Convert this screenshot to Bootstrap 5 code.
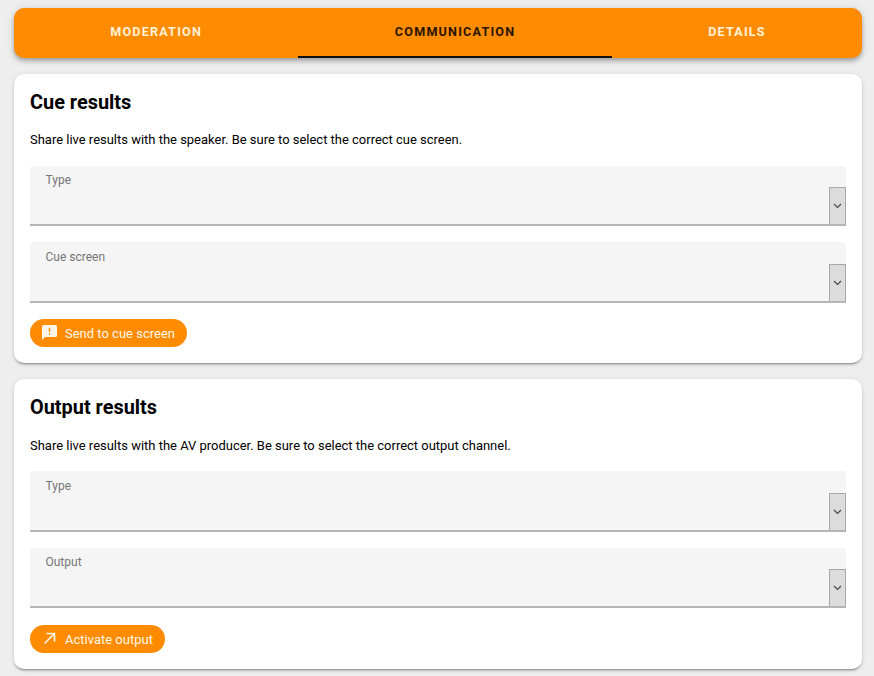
<!DOCTYPE html>
<html lang="en">
<head>
<meta charset="utf-8">
<title>Communication</title>
<link href="https://cdn.jsdelivr.net/npm/bootstrap@5.3.0/dist/css/bootstrap.min.css" rel="stylesheet">
<style>
html, body { height: 100%; }
body { background: #eeeeee; font-family: Roboto, sans-serif; color: #000; overflow: hidden; }
.page-wrap { padding: 8px 12px 0 14px; }
.tabbar { background: #ff8c00; border-radius: 10px; height: 50px; box-shadow: 0 2px 4px -1px rgba(0,0,0,.2), 0 4px 5px 0 rgba(0,0,0,.14), 0 1px 10px 0 rgba(0,0,0,.12); margin-bottom: 15.8px; overflow: hidden; }
.tabbar .tab-link { flex: 1 1 auto; text-align: center; color: #fff0d8; font-size: 12.6px; font-weight: 700; letter-spacing: 1.2px; line-height: 48px; height: 50px; border-bottom: 2px solid transparent; text-decoration: none; }
.tabbar .tab-link.is-on { color: #2a1500; border-bottom-color: #14100c; padding: 0 .5px; }
.panel { background: #fff; border: 0; border-radius: 10px; box-shadow: 0 3px 1px -2px rgba(0,0,0,.2), 0 2px 2px 0 rgba(0,0,0,.14), 0 1px 5px 0 rgba(0,0,0,.12); padding: 16px 16px 16.2px; margin-bottom: 16px; }
.panel h2 { font-size: 19.9px; font-weight: 700; line-height: 24px; padding-top: 1px; margin: 0 0 15.5px; }
.panel p { font-size: 12.98px; line-height: 20px; margin: 0 0 15.500px; }
.select-box { position: relative; background: #f5f5f5; height: 60.4px; border-radius: 4px 4px 0 0; border-bottom: 2px solid #b5b5b5; margin-bottom: 16px; padding: 6.5px 16px 6px 15.5px; font-size: 12px; line-height: 16px; color: #757575; }
.select-box.before-pill { margin-bottom: 16.6px; }
.select-arrow { position: absolute; right: 0; bottom: 0; width: 17px; height: 37px; background: #dcdcdc; border: 1px solid #a8a8a8; border-bottom: 0; display: flex; align-items: center; justify-content: center; }
.pill { display: flex; align-items: center; background: #ff8c00; color: #fff6ea; border: 0; border-radius: 14px; height: 28px; padding: 1px 12.5px 0 12px; font-size: 13px; line-height: 27px; }
.pill:hover, .pill:active { background: #ff8c00; color: #fff6ea; }
.pill svg { margin-right: 8px; margin-top: -2px; flex: none; }
</style>
</head>
<body>
<div class="page-wrap">
  <nav class="tabbar d-flex">
    <a class="tab-link" href="#">MODERATION</a>
    <a class="tab-link is-on" href="#">COMMUNICATION</a>
    <a class="tab-link" href="#">DETAILS</a>
  </nav>

  <section class="panel card">
    <h2>Cue results</h2>
    <p>Share live results with the speaker. Be sure to select the correct cue screen.</p>
    <div class="select-box">Type
      <span class="select-arrow"><svg width="9" height="6" viewBox="0 0 9 6"><path d="M1 1l3.500 3.500L8 1" fill="none" stroke="#444" stroke-width="1.100"/></svg></span>
    </div>
    <div class="select-box before-pill">Cue screen
      <span class="select-arrow"><svg width="9" height="6" viewBox="0 0 9 6"><path d="M1 1l3.500 3.500L8 1" fill="none" stroke="#444" stroke-width="1.100"/></svg></span>
    </div>
    <div class="d-flex">
      <button class="pill" type="button">
        <svg width="15" height="15" viewBox="0 0 15 15"><path fill-rule="evenodd" fill="#fff6ea" d="M1.500 0h12A1.500 1.500 0 0 1 15 1.500v9a1.500 1.500 0 0 1-1.500 1.500H3L0 15V1.500A1.500 1.500 0 0 1 1.500 0zM6.800 2.800v4.200h1.400V2.800zM6.800 8.300v1.400h1.400V8.300z"/></svg>
        Send to cue screen
      </button>
    </div>
  </section>

  <section class="panel card">
    <h2>Output results</h2>
    <p>Share live results with the AV producer. Be sure to select the correct output channel.</p>
    <div class="select-box">Type
      <span class="select-arrow"><svg width="9" height="6" viewBox="0 0 9 6"><path d="M1 1l3.500 3.500L8 1" fill="none" stroke="#444" stroke-width="1.100"/></svg></span>
    </div>
    <div class="select-box before-pill">Output
      <span class="select-arrow"><svg width="9" height="6" viewBox="0 0 9 6"><path d="M1 1l3.500 3.500L8 1" fill="none" stroke="#444" stroke-width="1.100"/></svg></span>
    </div>
    <div class="d-flex">
      <button class="pill" type="button">
        <svg width="15" height="15" viewBox="0 0 15 15"><path d="M4.500 2.500h8v8M12.500 2.500L2.500 12.500" fill="none" stroke="#fff6ea" stroke-width="1.700"/></svg>
        Activate output
      </button>
    </div>
  </section>
</div>
<script src="https://cdn.jsdelivr.net/npm/bootstrap@5.3.0/dist/js/bootstrap.bundle.min.js"></script>
</body>
</html>
